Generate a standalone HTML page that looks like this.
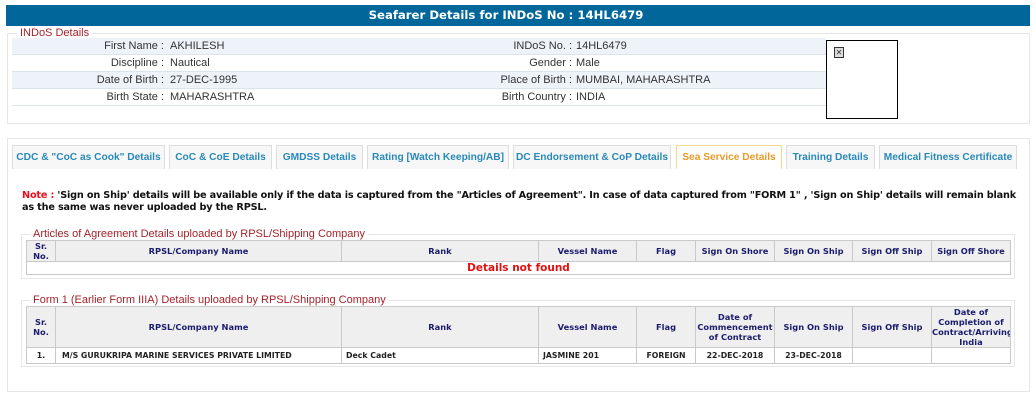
<!DOCTYPE html>
<html><head><meta charset="utf-8"><style>
*{margin:0;padding:0;box-sizing:border-box}
body{width:1036px;height:406px;background:#fff;position:relative;font-family:"Liberation Sans",Arial,sans-serif;overflow:hidden}
.a{position:absolute}
.hdr{left:6px;top:5px;width:1024px;height:21px;background:#01679a;color:#fff;font:bold 11.7px "DejaVu Sans",sans-serif;text-align:center;line-height:21px;padding-right:24px}
.fs{border:1px solid #e6e6e6}
.lg{background:#fff;color:#a3232a;font-size:11px;padding:0 3px;line-height:12px}
.row{left:12px;width:814px;height:17px;border-bottom:1px solid #dde3ea;font-size:11px;color:#333;line-height:17px}
.row.b{background:#eef3fa}
.row span{position:absolute;white-space:nowrap}
.l1{right:662px;text-align:right}
.v1{left:158px}
.l2{left:380px;width:180px;text-align:right}
.v2{left:564px}
.tab{top:145px;height:24px;border:1px solid #ddd;border-bottom:none;background:#f7f7f7;color:#2989b8;font-weight:bold;font-size:10.2px;text-align:center;line-height:24px;white-space:nowrap;overflow:hidden}
.tab.act{border-color:#f3d98f;background:#fff;color:#e89b2a}
.note{left:22px;top:190px;font:bold 9.7px "DejaVu Sans",sans-serif;letter-spacing:-0.17px;color:#111;line-height:12px;white-space:nowrap}
table{border-collapse:collapse;position:absolute;left:26px;width:984px;font-family:"DejaVu Sans",sans-serif;table-layout:fixed}
td,th{border:1px solid #c9c9c9;font-size:8.3px;text-align:center;overflow:hidden;white-space:nowrap}
th{background:#efefef;color:#1c1c6e;font-weight:bold;line-height:10px;white-space:normal}
td{font-weight:bold;color:#222;font-size:7.8px}
</style></head><body>
<div class="a hdr">Seafarer Details for INDoS No : 14HL6479</div>

<div class="a fs" style="left:7px;top:33px;width:1023px;height:91px"></div>
<div class="a lg" style="left:17px;top:27px">INDoS Details</div>
<div class="a row b" style="top:38px"><span class="l1">First Name :</span><span class="v1">AKHILESH</span><span class="l2">INDoS No. :</span><span class="v2">14HL6479</span></div>
<div class="a row" style="top:55px"><span class="l1">Discipline :</span><span class="v1">Nautical</span><span class="l2">Gender :</span><span class="v2">Male</span></div>
<div class="a row b" style="top:72px"><span class="l1">Date of Birth :</span><span class="v1">27-DEC-1995</span><span class="l2">Place of Birth :</span><span class="v2">MUMBAI, MAHARASHTRA</span></div>
<div class="a row" style="top:89px"><span class="l1">Birth State :</span><span class="v1">MAHARASHTRA</span><span class="l2">Birth Country :</span><span class="v2">INDIA</span></div>
<div class="a" style="left:826px;top:40px;width:72px;height:79px;border:1px solid #000;background:#fff"></div>
<div class="a" style="left:834px;top:47px;width:10px;height:11px;border:1px solid #333;background:#ddd;font-size:8px;line-height:9px;text-align:center;color:#333">✕</div>

<div class="a fs" style="left:7px;top:138px;width:1023px;height:254px"></div>
<div class="a tab" style="left:12px;width:153px">CDC &amp; "CoC as Cook" Details</div>
<div class="a tab" style="left:169px;width:103px">CoC &amp; CoE Details</div>
<div class="a tab" style="left:276px;width:87px">GMDSS Details</div>
<div class="a tab" style="left:367px;width:142px">Rating [Watch Keeping/AB]</div>
<div class="a tab" style="left:513px;width:158px">DC Endorsement &amp; CoP Details</div>
<div class="a tab act" style="left:676px;width:106px">Sea Service Details</div>
<div class="a tab" style="left:786px;width:89px">Training Details</div>
<div class="a tab" style="left:879px;width:138px">Medical Fitness Certificate</div>

<div class="a note"><span style="color:#e8101a">Note :</span> 'Sign on Ship' details will be available only if the data is captured from the "Articles of Agreement". In case of data captured from "FORM 1" , 'Sign on Ship' details will remain blank<br>as the same was never uploaded by the RPSL.</div>

<div class="a fs" style="left:21px;top:234px;width:994px;height:45px"></div>
<div class="a lg" style="left:30px;top:228px">Articles of Agreement Details uploaded by RPSL/Shipping Company</div>
<table style="top:240px">
<colgroup><col style="width:29px"><col style="width:286px"><col style="width:197px"><col style="width:98px"><col style="width:59px"><col style="width:79px"><col style="width:78px"><col style="width:79px"><col style="width:79px"></colgroup>
<tr style="height:21px"><th>Sr.<br>No.</th><th>RPSL/Company Name</th><th>Rank</th><th>Vessel Name</th><th>Flag</th><th>Sign On Shore</th><th>Sign On Ship</th><th>Sign Off Ship</th><th>Sign Off Shore</th></tr>
<tr style="height:13px"><td colspan="9" style="color:#e01010;font-size:10.5px;line-height:11px">Details not found</td></tr>
</table>

<div class="a fs" style="left:21px;top:300px;width:994px;height:67px"></div>
<div class="a lg" style="left:30px;top:294px">Form 1 (Earlier Form IIIA) Details uploaded by RPSL/Shipping Company</div>
<table style="top:306px">
<colgroup><col style="width:29px"><col style="width:286px"><col style="width:197px"><col style="width:98px"><col style="width:59px"><col style="width:79px"><col style="width:78px"><col style="width:79px"><col style="width:79px"></colgroup>
<tr style="height:39px"><th>Sr.<br>No.</th><th>RPSL/Company Name</th><th>Rank</th><th>Vessel Name</th><th>Flag</th><th>Date of Commencement of Contract</th><th>Sign On Ship</th><th>Sign Off Ship</th><th>Date of Completion of Contract/Arriving India</th></tr>
<tr style="height:16px"><td>1.</td><td style="text-align:left;padding-left:6px">M/S GURUKRIPA MARINE SERVICES PRIVATE LIMITED</td><td style="text-align:left;padding-left:4px">Deck Cadet</td><td style="text-align:left;padding-left:4px">JASMINE 201</td><td>FOREIGN</td><td>22-DEC-2018</td><td>23-DEC-2018</td><td></td><td></td></tr>
</table>
</body></html>
